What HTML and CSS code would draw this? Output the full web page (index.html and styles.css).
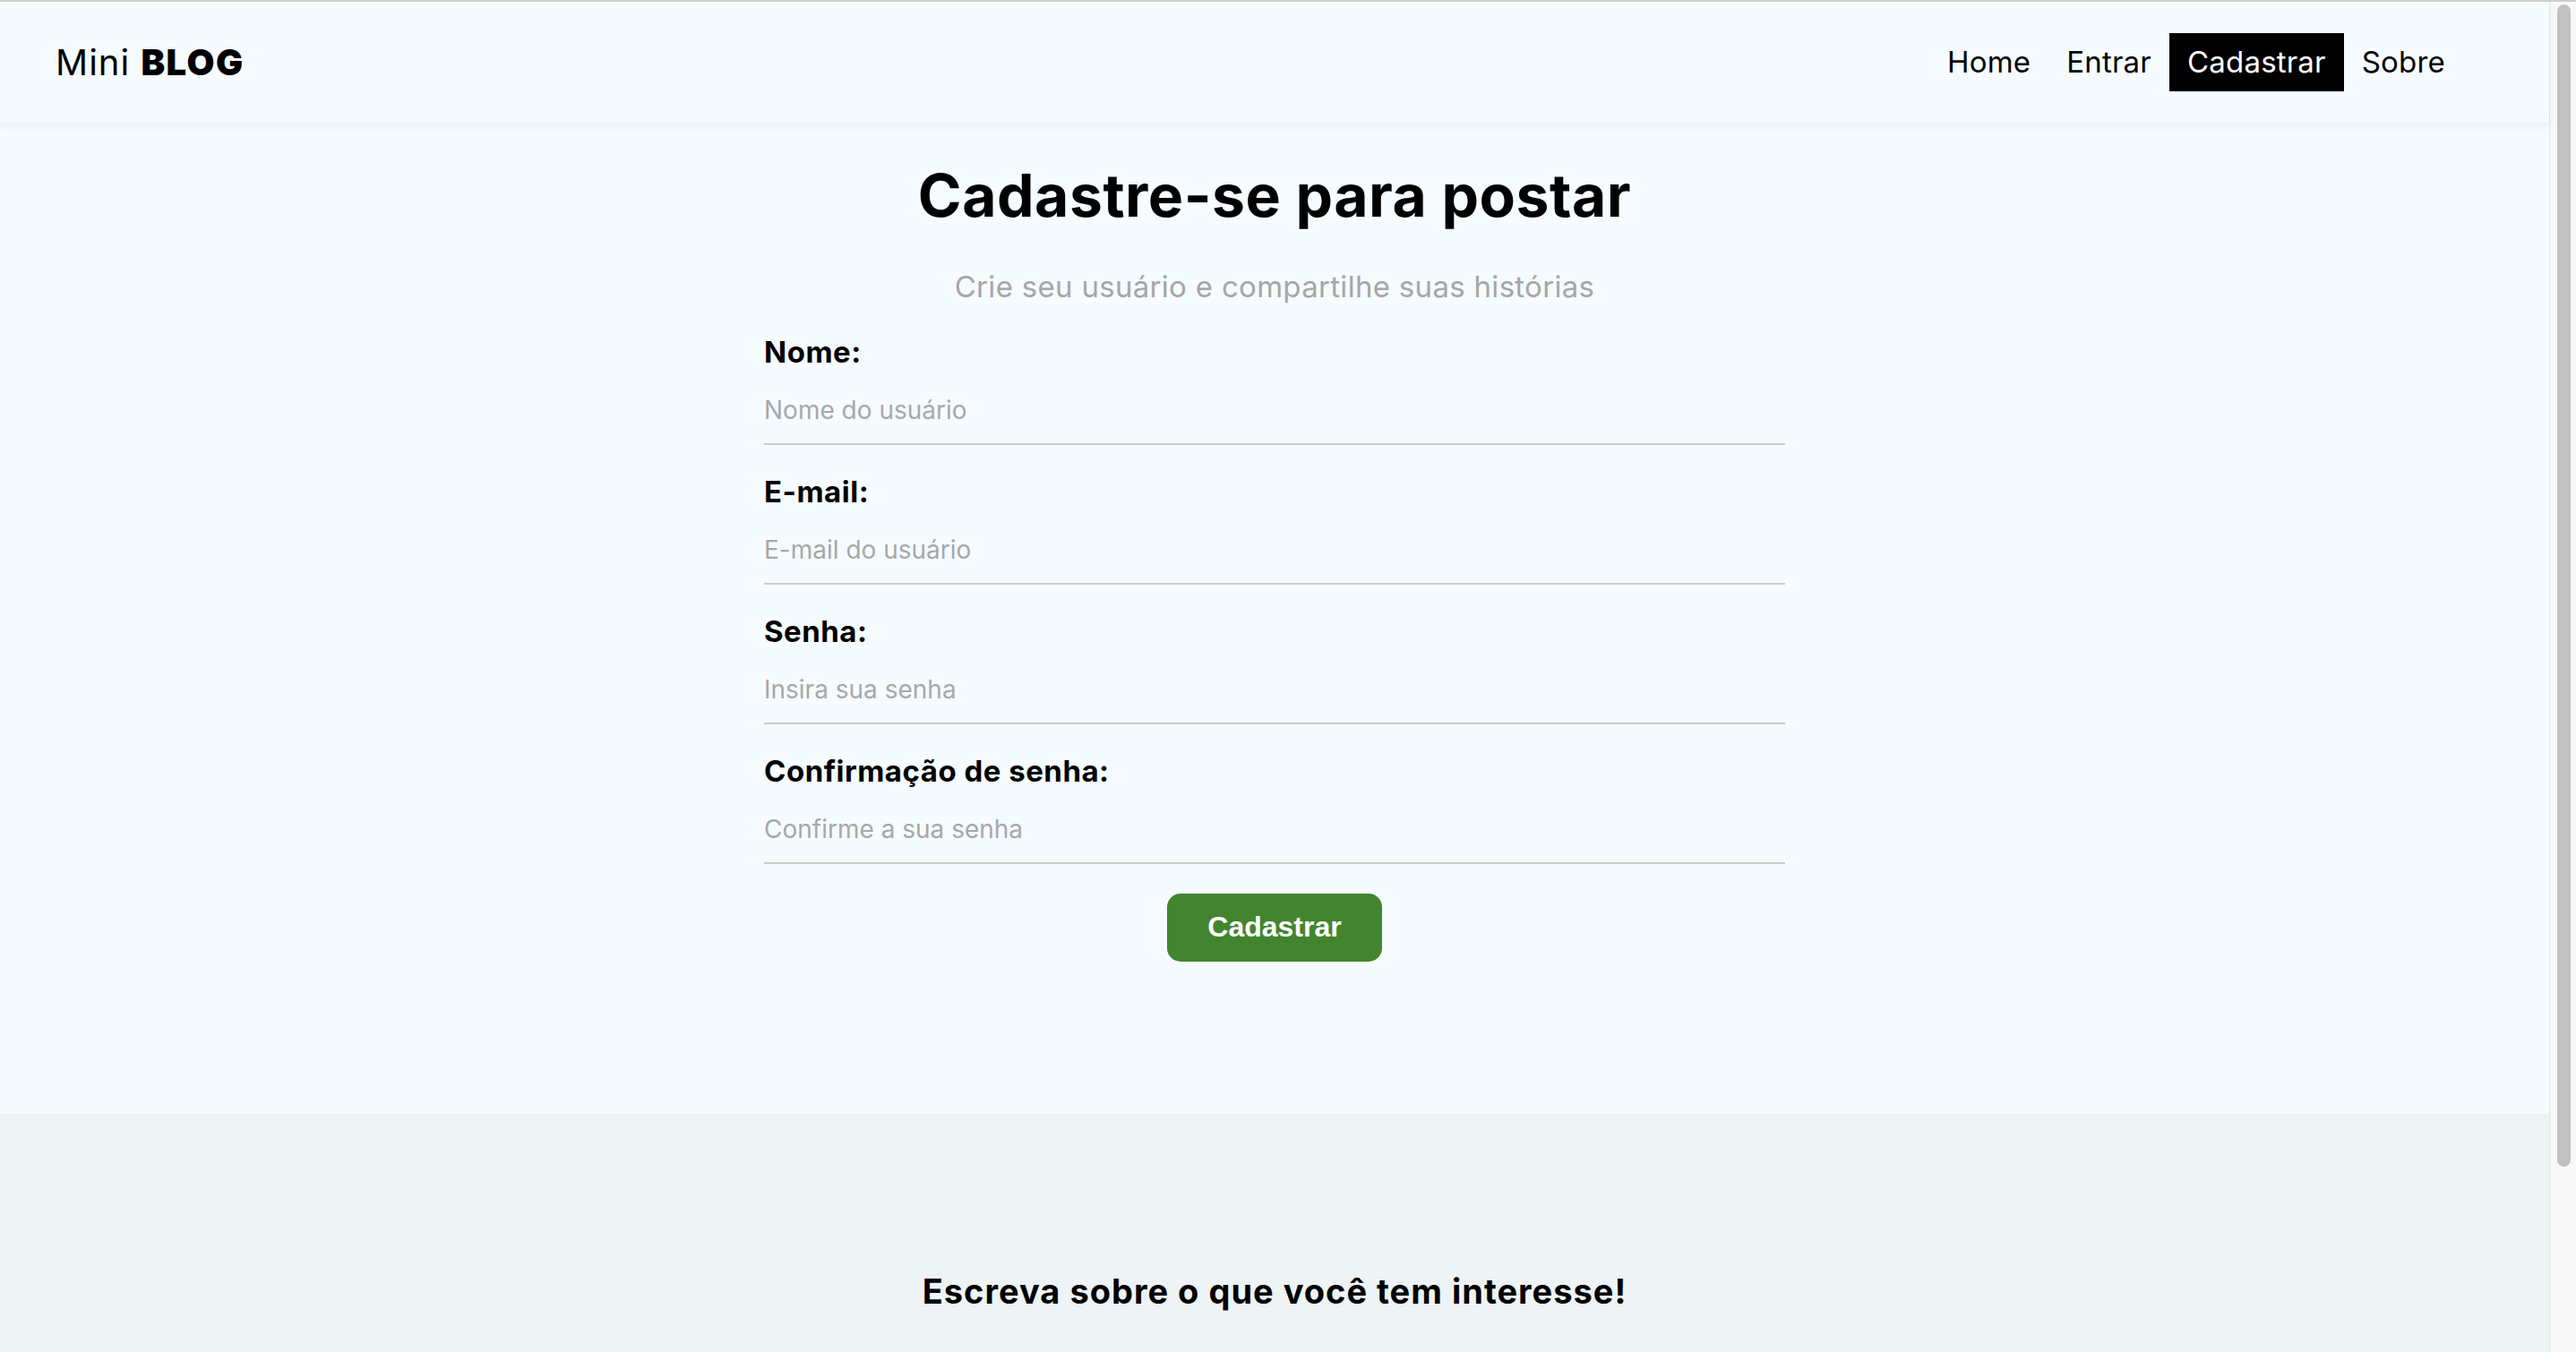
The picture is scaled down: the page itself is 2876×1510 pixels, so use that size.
FILE: index.html
```html
<!DOCTYPE html>
<html lang="pt-BR">
<head>
<meta charset="utf-8">
<title>Mini Blog - Cadastro</title>
<link rel="stylesheet" href="styles.css">
</head>
<body>
<div class="page">
  <nav class="navbar">
    <a class="brand" href="#">Mini <span class="brand-strong">BLOG</span></a>
    <ul class="nav-links">
      <li><a class="nav-link" href="#">Home</a></li>
      <li><a class="nav-link" href="#">Entrar</a></li>
      <li><a class="nav-link active" href="#">Cadastrar</a></li>
      <li><a class="nav-link" href="#">Sobre</a></li>
    </ul>
  </nav>
  <main class="register">
    <h1 class="title">Cadastre-se para postar</h1>
    <p class="subtitle">Crie seu usuário e compartilhe suas histórias</p>
    <form class="form">
      <label class="field">
        <span class="label-text">Nome:</span>
        <input class="input" type="text" name="displayName" placeholder="Nome do usuário">
      </label>
      <label class="field">
        <span class="label-text">E-mail:</span>
        <input class="input" type="email" name="email" placeholder="E-mail do usuário">
      </label>
      <label class="field">
        <span class="label-text">Senha:</span>
        <input class="input" type="password" name="password" placeholder="Insira sua senha">
      </label>
      <label class="field">
        <span class="label-text">Confirmação de senha:</span>
        <input class="input" type="password" name="confirmPassword" placeholder="Confirme a sua senha">
      </label>
      <div class="actions">
        <button class="btn" type="button">Cadastrar</button>
      </div>
    </form>
  </main>
  <footer class="footer">
    <h3 class="footer-title">Escreva sobre o que você tem interesse!</h3>
  </footer>
</div>
<div class="scrollbar" aria-hidden="true">
  <div class="scrollbar-thumb"></div>
</div>
</body>
</html>
```

FILE: styles.css
```css
* {
  box-sizing: border-box;
}

html {
  background: #f5fbfe;
}

body {
  margin: 0;
  display: flex;
  align-items: stretch;
  border-top: 2px solid #cdcdcd;
  font-family: "Inter", "Noto Sans", sans-serif;
  color: #000;
  background: #f5fbfe;
}

.page {
  flex: 1;
  min-width: 0;
}

.scrollbar {
  flex: none;
  width: 30px;
  padding: 3px 6px 0 8px;
  background: #f8f8f8;
  border-left: 1px solid #e4e4e4;
}

.scrollbar-thumb {
  height: 1298px;
  border-radius: 8px;
  background: #c1c1c1;
}

.navbar {
  display: flex;
  justify-content: space-between;
  align-items: center;
  height: 135px;
  padding: 0 96px 0 62px;
  background: #f5fbfe;
  box-shadow: 0 4px 10px rgba(0, 0, 0, 0.05);
  position: relative;
  z-index: 1;
}

.brand {
  font-size: 40px;
  color: #000;
  text-decoration: none;
  letter-spacing: 1px;
}

.brand-strong {
  font-weight: 900;
  letter-spacing: 1.5px;
}

.nav-links {
  display: flex;
  list-style: none;
  margin: 0;
  padding: 0;
}

.nav-link {
  display: block;
  padding: 16px 20px;
  font-size: 33px;
  line-height: 33px;
  letter-spacing: 0.2px;
  color: #000;
  text-decoration: none;
}

.nav-link.active {
  background: #000;
  color: #fff;
}

.register {
  padding: 42px 0 170px;
  text-align: center;
}

.title {
  margin: 0;
  font-size: 66px;
  line-height: 1.2;
  font-weight: 700;
  letter-spacing: 0.5px;
}

.subtitle {
  margin: 43px 0 0;
  font-size: 33px;
  line-height: 1.2;
  letter-spacing: 0.3px;
  color: #a6a6a6;
}

.form {
  max-width: 1140px;
  margin: 0 auto;
  text-align: left;
}

.field {
  display: flex;
  flex-direction: column;
  margin-top: 33px;
}

.label-text {
  font-size: 33px;
  line-height: 38px;
  font-weight: 700;
  letter-spacing: 0.5px;
}

.input {
  margin-top: 15px;
  padding: 14px 0 19px;
  border: none;
  border-bottom: 2px solid #cccccc;
  background: transparent;
  font-family: inherit;
  font-size: 28px;
  line-height: 35px;
  color: #000;
  outline: none;
}

.input::placeholder {
  color: #a8a8a8;
}

.actions {
  display: flex;
  justify-content: center;
  margin-top: 33px;
}

.btn {
  width: 240px;
  height: 76px;
  border: none;
  border-radius: 15px;
  background: #43852f;
  color: #fff;
  font-family: "Liberation Sans", Arial, sans-serif;
  font-size: 32px;
  font-weight: 700;
  cursor: pointer;
}

.footer {
  background: #eef3f5;
  padding: 176px 0 292px;
  text-align: center;
}

.footer-title {
  margin: 0;
  font-size: 38px;
  line-height: 1.2;
  font-weight: 700;
  letter-spacing: 1px;
}
```
